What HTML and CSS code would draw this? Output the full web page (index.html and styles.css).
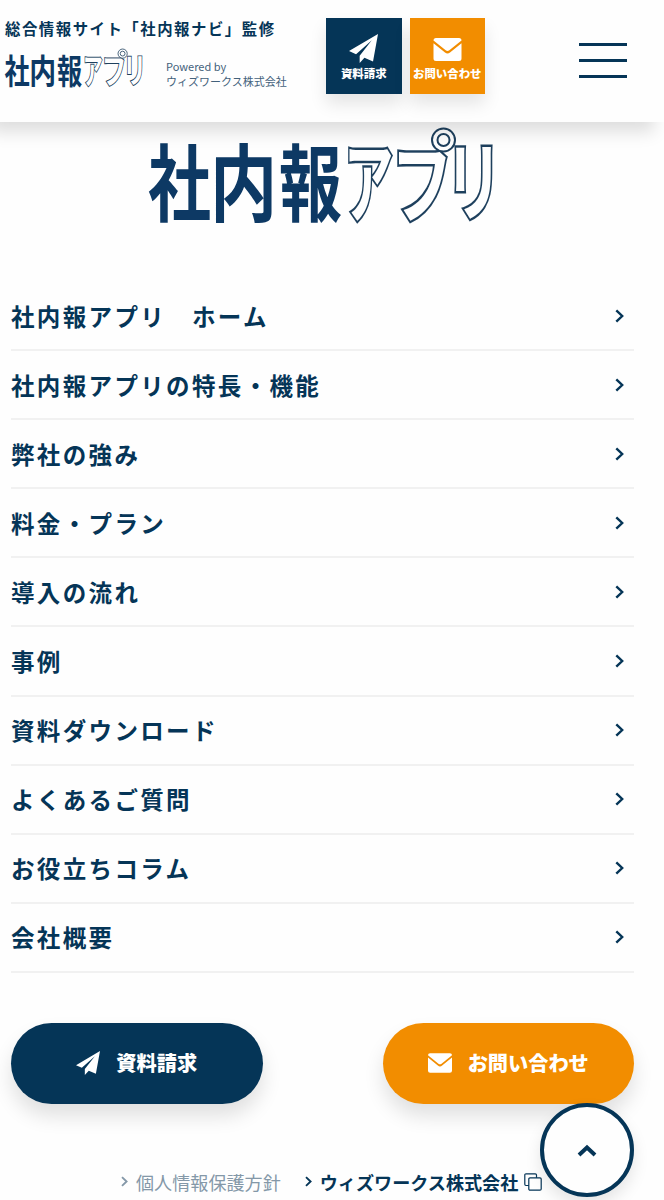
FILE: index.html
```
<!DOCTYPE html>
<html lang="ja">
<head>
    <meta charset="UTF-8">
    <meta name="viewport" content="width=device-width, initial-scale=1.0">
    <title>社内報アプリ</title>
    <link rel="stylesheet" href="styles.css">
</head>
<body>
    <!-- shared symbols -->
    <svg class="symbols" aria-hidden="true">
        <symbol id="logo" viewBox="0 0 348 98" overflow="visible">
            <g class="logo-solid">
                <text transform="translate(-1 88) scale(.75 1)">社</text>
                <text transform="translate(61 88) scale(.8 1)">内</text>
                <text transform="translate(130 88) scale(.75 1)">報</text>
            </g>
            <g class="logo-line">
                <text transform="translate(195 88) scale(.56 1)">ア</text>
                <text transform="translate(242 89) scale(.7 1)">フ</text>
                <text transform="translate(296 87) scale(.65 .98)">リ</text>
                <circle cx="294.5" cy="13" r="11.5"/>
                <circle cx="294.5" cy="13" r="6"/>
            </g>
        </symbol>
        <symbol id="plane" viewBox="0 0 28 28">
            <path d="M28 0 0 16.5 6.8 19.5 22 6 10.3 21V28l4.6-5.1 8.3 3.6z"/>
        </symbol>
        <symbol id="mail" viewBox="0 0 28 23">
            <path d="M2.5 0h23A2.5 2.5 0 0 1 28 2.5L15.8 12.3a3 3 0 0 1-3.6 0L0 2.5A2.5 2.5 0 0 1 2.5 0z"/>
            <path d="M0 5.2 11.5 14.5a4 4 0 0 0 5 0L28 5.2V20.5a2.5 2.5 0 0 1-2.5 2.5h-23A2.5 2.5 0 0 1 0 20.5z"/>
        </symbol>
        <symbol id="arrow" viewBox="0 0 9 14">
            <path d="M1.3 1.3 7.2 7l-5.9 5.7" fill="none" stroke="currentColor" stroke-width="2.4"/>
        </symbol>
    </svg>

    <header class="header">
        <div class="brand">
            <p class="tagline">総合情報サイト「社内報ナビ」監修</p>
            <div class="brand-row">
                <svg class="brand-logo"><use href="#logo"/></svg>
                <p class="powered">Powered by<br>ウィズワークス株式会社</p>
            </div>
        </div>
        <div class="header-buttons">
            <a class="square navy"><svg class="square-plane"><use href="#plane"/></svg><span>資料請求</span></a>
            <a class="square orange"><svg class="square-mail"><use href="#mail"/></svg><span>お問い合わせ</span></a>
        </div>
        <div class="hamburger"><span></span><span></span><span></span></div>
    </header>

    <main class="menu">
        <svg class="menu-logo"><use href="#logo"/></svg>
        <ul class="menu-list">
            <li>社内報アプリ　ホーム<svg><use href="#arrow"/></svg></li>
            <li>社内報アプリの特長・機能<svg><use href="#arrow"/></svg></li>
            <li>弊社の強み<svg><use href="#arrow"/></svg></li>
            <li>料金・プラン<svg><use href="#arrow"/></svg></li>
            <li>導入の流れ<svg><use href="#arrow"/></svg></li>
            <li>事例<svg><use href="#arrow"/></svg></li>
            <li>資料ダウンロード<svg><use href="#arrow"/></svg></li>
            <li>よくあるご質問<svg><use href="#arrow"/></svg></li>
            <li>お役立ちコラム<svg><use href="#arrow"/></svg></li>
            <li>会社概要<svg><use href="#arrow"/></svg></li>
        </ul>
        <div class="buttons">
            <a class="pill navy"><svg class="pill-plane"><use href="#plane"/></svg>資料請求</a>
            <a class="pill orange"><svg class="pill-mail"><use href="#mail"/></svg>お問い合わせ</a>
        </div>
        <div class="footer-links">
            <a class="privacy"><svg class="link-arrow"><use href="#arrow"/></svg>個人情報保護方針</a>
            <a class="company"><svg class="link-arrow"><use href="#arrow"/></svg>ウィズワークス株式会社
                <svg class="copy" viewBox="0 0 18 18"><rect x="4.8" y="4.8" width="12.4" height="12.4" rx="1.2"/><path d="M4.8 12.5H2A1.2 1.2 0 0 1 .8 11.3V2A1.2 1.2 0 0 1 2 .8h9.3A1.2 1.2 0 0 1 12.5 2v2.8"/></svg>
            </a>
        </div>
    </main>

    <a class="page-top"><svg viewBox="0 0 20 13"><path d="M2 11 10 3.5 18 11"/></svg></a>
</body>
</html>
```

FILE: styles.css
```
* { box-sizing: border-box; }
body {
    position: relative;
    margin: 0;
    height: 1200px;
    overflow: hidden;
    background: #fefefe;
    color: #053557;
    font-family: "Noto Sans CJK JP", sans-serif;
}
p, ul { margin: 0; padding: 0; }
svg { display: block; flex: none; fill: currentColor; }
.symbols { position: absolute; width: 0; height: 0; }
.navy { background: #053557; }
.orange { background: #f28d00; }

/* logo */
.brand-logo, .menu-logo { overflow: visible; opacity: .99; }
.logo-solid { font-size: 84px; font-weight: 700; fill: #0b3763; }
.logo-line {
    font-size: 88px;
    font-weight: 700;
    fill: #fefefe;
    stroke: #1c3e5c;
    stroke-width: 2;
}
.logo-line text { paint-order: stroke; stroke-width: 5; }

/* header */
.header {
    position: relative;
    z-index: 1;
    display: flex;
    height: 122px;
    background: #fefefe;
    box-shadow: -10px 10px 16px rgba(0, 0, 0, 0.13);
}
.brand { width: 326px; padding: 17px 0 0 5px; }
.tagline {
    font-size: 15.4px;
    font-weight: 700;
    letter-spacing: 1.52px;
    line-height: 22px;
    white-space: nowrap;
}
.brand-row { display: flex; margin-top: 9px; }
.brand-logo { width: 139px; height: 40px; }
.powered {
    margin: 11px 0 0 22px;
    color: #43617b;
    font-size: 11px;
    line-height: 15px;
    white-space: nowrap;
}
.header-buttons { display: flex; gap: 8px; padding-top: 18px; }
.square {
    display: flex;
    flex-direction: column;
    align-items: center;
    justify-content: flex-end;
    width: 75.5px;
    height: 76px;
    padding-bottom: 12px;
    color: #fff;
    font-size: 11.4px;
    font-weight: 900;
    line-height: 17px;
    white-space: nowrap;
    box-shadow: 0 10px 16px rgba(0, 0, 0, 0.1);
}
.square-plane { width: 29px; height: 29px; margin-bottom: 2px; }
.square-mail { width: 29px; height: 23px; margin-bottom: 4px; }
.hamburger {
    display: flex;
    flex-direction: column;
    gap: 13px;
    width: 48px;
    margin: 43px 0 0 94px;
}
.hamburger span { height: 3px; background: #053557; }

/* menu */
.menu { padding: 5px 30px 0 11px; }
.menu-logo { width: 348px; height: 98px; margin: 0 0 0 138px; }
.menu-list { margin-top: 57px; list-style: none; }
.menu-list li {
    display: flex;
    align-items: center;
    justify-content: space-between;
    height: 69.1px;
    padding-right: 10px;
    border-bottom: 2px solid #f1f1f1;
    font-size: 23.5px;
    font-weight: 700;
    letter-spacing: 2.35px;
}
.menu-list svg { width: 9px; height: 14px; }
.buttons { display: flex; justify-content: space-between; margin-top: 50px; }
.pill {
    display: flex;
    align-items: center;
    justify-content: center;
    gap: 16px;
    width: 251.5px;
    height: 81px;
    padding-bottom: 1px;
    border-radius: 41px;
    color: #fff;
    font-size: 20.2px;
    font-weight: 900;
    box-shadow: 0 12px 20px rgba(0, 0, 0, 0.12);
}
.pill-plane { width: 24px; height: 24px; }
.pill-mail { width: 24px; height: 20px; }
.footer-links {
    display: flex;
    gap: 24px;
    margin: 64px 0 0 110px;
    line-height: 28px;
    white-space: nowrap;
}
.footer-links a { display: flex; align-items: center; font-size: 18.1px; }
.footer-links .company { font-weight: 700; }
.footer-links .privacy { color: #8498a8; }
.link-arrow { width: 7px; height: 11px; margin-right: 8px; }
.copy {
    width: 18px;
    height: 18px;
    margin-left: 6px;
    fill: none;
    stroke: currentColor;
    stroke-width: 1.2;
}

.page-top {
    position: absolute;
    top: 1103px;
    left: 540px;
    z-index: 2;
    display: flex;
    align-items: center;
    justify-content: center;
    width: 94px;
    height: 94px;
    border: 4.5px solid #053557;
    border-radius: 50%;
    background: #fefefe;
    box-shadow: 0 8px 16px rgba(0, 0, 0, 0.1);
}
.page-top svg {
    width: 20px;
    height: 13px;
    fill: none;
    stroke: currentColor;
    stroke-width: 4;
}
```
